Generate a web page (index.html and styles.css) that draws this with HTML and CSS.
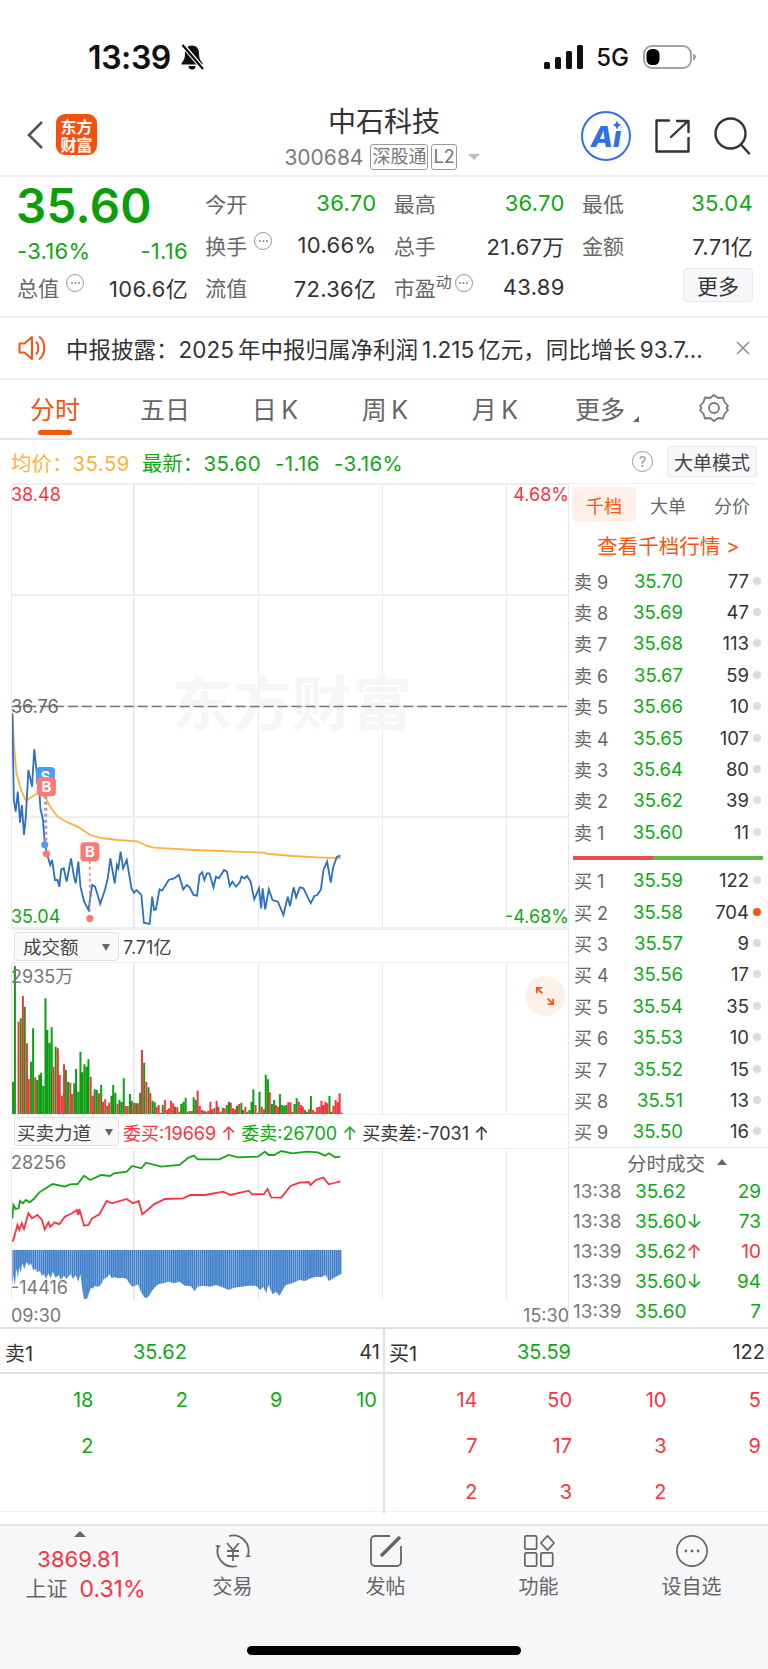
FILE: index.html
```html
<!DOCTYPE html>
<html lang="zh">
<head>
<meta charset="utf-8">
<title>中石科技</title>
<link rel="stylesheet" href="styles.css">
</head>
<body>
<div class="page">
  <header class="status">
    <span class="time">13:39</span>
    <svg class="bell" viewBox="0 0 26 26"><path d="M13 1.500c-4.500 0-7 3.500-7 8 0 4.500-1 7-3.500 9.500v1.500h21V19c-2.500-2.500-3.500-5-3.500-9.500 0-4.500-2.500-8-7-8z" fill="#111"/><path d="M9.500 22a3.500 3.500 0 0 0 7 0z" fill="#111"/><path d="M3 0l21 25" stroke="#fff" stroke-width="4.500"/><path d="M3.500 1l20.500 24" stroke="#111" stroke-width="2.200"/></svg>
    <span class="status-gap"></span>
    <svg class="signal" viewBox="0 0 39 24"><rect x="0" y="17" width="6" height="7" rx="1.500"/><rect x="11" y="12" width="6" height="12" rx="1.500"/><rect x="22" y="6" width="6" height="18" rx="1.500"/><rect x="33" y="0" width="6" height="24" rx="1.500"/></svg>
    <span class="net">5G</span>
    <svg class="battery" viewBox="0 0 54 24"><rect x="1" y="1" width="47" height="22" rx="8" fill="#fff" stroke="#a3a3a3" stroke-width="2"/><rect x="3.500" y="4" width="13" height="16" rx="5.500" fill="#000"/><path d="M50 8.500c2 .6 3 2 3 3.500s-1 2.900-3 3.500z" fill="#a3a3a3"/></svg>
  </header>

  <nav class="nav">
    <div class="nav-left">
      <svg class="back" viewBox="0 0 18 30"><path d="M16 2L3 15l13 13" fill="none" stroke="#555" stroke-width="2.600"/></svg>
      <div class="logo"><span>东方</span><span>财富</span></div>
    </div>
    <div class="nav-center">
      <div class="nav-title">中石科技</div>
      <div class="nav-sub">
        <span class="code">300684</span>
        <span class="tag">深股通</span>
        <span class="tag">L2</span>
        <span class="nav-caret"></span>
      </div>
    </div>
    <div class="nav-right">
      <div class="ai"><span>Ai</span><svg class="ai-spark" viewBox="0 0 10 10"><path d="M5 0c.5 3 2 4.500 5 5-3 .5-4.500 2-5 5-.5-3-2-4.500-5-5 3-.5 4.500-2 5-5z"/></svg></div>
      <svg class="share" viewBox="0 0 35 34"><path d="M14 1.500H1.500v31h32V19" fill="none" stroke="#333" stroke-width="2.400" stroke-linejoin="round" stroke-linecap="round"/><path d="M16 18L33 2M22 2h11.500v11" fill="none" stroke="#333" stroke-width="2.400" stroke-linejoin="round" stroke-linecap="round"/></svg>
      <svg class="search" viewBox="0 0 38 38"><circle cx="17.500" cy="16.500" r="15" fill="none" stroke="#333" stroke-width="2.400"/><path d="M28 27.500l8 9" fill="none" stroke="#333" stroke-width="2.400" stroke-linecap="round"/></svg>
    </div>
  </nav>

  <section class="quote">
    <div class="q-cell q-price">35.60</div>
    <div class="q-cell"><span class="q-label">今开</span><span class="g">36.70</span></div>
    <div class="q-cell"><span class="q-label">最高</span><span class="g">36.70</span></div>
    <div class="q-cell"><span class="q-label">最低</span><span class="g">35.04</span></div>

    <div class="q-cell q-change g"><span>-3.16%</span><span>-1.16</span></div>
    <div class="q-cell"><span class="q-label">换手<i class="dots"></i></span><span>10.66%</span></div>
    <div class="q-cell"><span class="q-label">总手</span><span>21.67万</span></div>
    <div class="q-cell"><span class="q-label">金额</span><span>7.71亿</span></div>

    <div class="q-cell"><span class="q-label">总值<i class="dots"></i></span><span>106.6亿</span></div>
    <div class="q-cell"><span class="q-label">流值</span><span>72.36亿</span></div>
    <div class="q-cell"><span class="q-label">市盈<sup class="q-sup">动</sup><i class="dots dots-tight"></i></span><span>43.89</span></div>
    <div class="q-cell q-end"><span class="more-btn">更多</span></div>
  </section>

  <section class="notice">
    <svg class="speaker" viewBox="0 0 30 26"><path d="M1.500 8.500h5L14 2v22l-7.500-6.500h-5z" fill="none" stroke="#f2570f" stroke-width="2" stroke-linejoin="round"/><path d="M18 6.500c3 3 3 10 0 13M21 1.500c7 5 7 18 0 23" fill="none" stroke="#f2570f" stroke-width="2"/></svg>
    <span class="notice-text">中报披露：2025&thinsp;年中报归属净利润&thinsp;1.215&thinsp;亿元，同比增长&thinsp;93.7...</span>
    <svg class="close" viewBox="0 0 14 14"><path d="M1 1l12 12M13 1L1 13" stroke="#8a8a8a" stroke-width="1.500"/></svg>
  </section>

  <section class="tabs">
    <div class="tab tab-on">分时</div>
    <div class="tab">五日</div>
    <div class="tab">日&thinsp;K</div>
    <div class="tab">周&thinsp;K</div>
    <div class="tab">月&thinsp;K</div>
    <div class="tab tab-more">更多</div>
    <div class="tab"><svg class="gear" viewBox="0 0 30 30"><path d="M15 2l4 3 5-.5 1.500 4.500L29 13l-1.500 2 1.500 2-3.500 4-1.500 4.500-5-.5-4 3-4-3-5 .5L4.500 21 1 17l1.500-2L1 13l3.500-4L6 4.500l5 .5z" fill="none" stroke="#777" stroke-width="1.800" stroke-linejoin="round"/><circle cx="15" cy="15" r="5" fill="none" stroke="#777" stroke-width="1.800"/></svg></div>
  </section>

  <section class="info">
    <span class="avg">均价：<b class="info-num">35.59</b></span>
    <span class="g latest">最新：<b class="info-num">35.60</b><b class="info-num">-1.16</b><b class="info-num">-3.16%</b></span>
    <span class="status-gap"></span>
    <span class="help">?</span>
    <span class="big-btn">大单模式</span>
  </section>

  <main class="body">
    <div class="left">
      <div class="panel main-chart">
        <span class="wm">东方财富</span>
        <svg class="plot" viewBox="30 -588 1529 1335" preserveAspectRatio="none">
          <polyline class="ln ln-avg" points="31,105 36,200 42,280 55,330 68,362 85,350 100,340 120,350 135,380 155,410 185,428 210,440 245,465 275,474 320,480 375,484 400,498 420,503 530,510 720,518 735,522 800,528 870,532 932,534"/>
          <polyline class="ln ln-price" points="31,100 35,360 40,395 46,335 52,428 57,375 63,465 68,410 75,270 85,320 91,208 100,300 105,330 108,385 115,420 120,490 127,525 135,555 140,540 148,600 155,600 160,620 165,568 172,565 180,605 192,535 200,590 205,610 212,545 218,620 228,665 240,690 250,615 258,620 265,645 272,672 285,630 293,595 300,535 312,610 318,555 322,565 328,515 335,565 345,540 358,625 365,638 372,630 385,645 392,728 408,732 415,650 420,690 425,688 435,628 442,632 460,600 475,595 488,585 500,628 510,615 518,622 528,645 538,647 545,585 552,577 558,600 565,580 572,580 583,622 590,590 598,595 612,570 620,575 628,618 635,605 645,620 655,608 660,590 668,595 675,588 685,605 695,658 708,625 714,685 718,625 725,688 735,628 745,660 760,665 775,705 787,650 793,678 803,622 810,652 820,622 830,625 850,670 860,648 868,645 878,628 885,570 895,545 905,608 912,560 922,530 932,527"/>
        </svg>
        <svg class="plot" viewBox="0 0 558 445">
          <line class="mid-dash" x1="0" y1="222.500" x2="558" y2="222.500"/>
          <line class="dot-b" x1="33" y1="300" x2="33" y2="361"/>
          <line class="dot-r" x1="34.600" y1="312" x2="34.600" y2="370"/>
          <line class="dot-r" x1="78" y1="377" x2="78" y2="435"/>
          <circle cx="32.800" cy="361" r="3.600" fill="#4d9bf7"/>
          <circle cx="34.600" cy="370" r="3.600" fill="#fb7a73"/>
          <circle cx="78" cy="435" r="3.600" fill="#fb7a73"/>
          <rect x="24" y="283" width="19" height="19" rx="4" fill="#4d9bf7"/>
          <text class="mk" x="33.500" y="298">S</text>
          <rect x="25" y="293.500" width="19" height="19" rx="4" fill="#fb7a73"/>
          <text class="mk" x="34.500" y="308.500">B</text>
          <rect x="68.500" y="358.500" width="19" height="19" rx="4" fill="#fb7a73"/>
          <text class="mk" x="78" y="373.500">B</text>
        </svg>
        <span class="ax ax-tl r">38.48</span>
        <span class="ax ax-tr r">4.68%</span>
        <span class="ax ax-ml">36.76</span>
        <span class="ax ax-bl g">35.04</span>
        <span class="ax ax-br g">-4.68%</span>
      </div>

      <div class="sub-head">
        <span class="sel">成交额<i class="sel-caret"></i></span>
        <span class="sub-val">7.71亿</span>
      </div>
      <div class="panel sub-chart">
        <svg class="plot" viewBox="30 102 1530 450" preserveAspectRatio="none">
          <path class="bar bar-g" d="M33 552V455M38 552V108M54 552V265M65 552V230M82 552V395M88 552V295M99 552V450M105 552V435M110 552V428M116 552V467M122 552V205M127 552V300M133 552V338M139 552V292M150 552V350M178 552V420M184 552V455M201 552V460M206 552V417M212 552V485M218 552V365M223 552V427M229 552V403M235 552V410M240 552V388M257 552V478M263 552V480M275 552V465M292 552V527M303 552V497M308 552V465M314 552V488M325 552V510M331 552V515M337 552V445M354 552V492M359 552V512M371 552V520M382 552V488M393 552V398M405 552V472M416 552V512M422 552V517M444 552V525M478 552V530M495 552V522M501 552V515M507 552V503M518 552V543M529 552V502M535 552V510M558 552V542M586 552V535M609 552V533M620 552V525M626 552V515M648 552V527M660 552V518M665 552V540M682 552V540M688 552V515M693 552V478M710 552V485M727 552V434M733 552V448M744 552V522M750 552V510M766 552V492M772 552V525M778 552V527M784 552V525M806 552V522M812 552V505M835 552V540M840 552V545M851 552V498M902 552V498M908 552V545"/>
          <path class="bar bar-r" d="M48 552V275M60 552V198M71 552V340M76 552V447M94 552V442M144 552V410M156 552V355M161 552V435M167 552V497M173 552V403M190 552V458M195 552V492M246 552V440M252 552V497M269 552V490M280 552V515M286 552V508M297 552V518M320 552V522M342 552V528M348 552V528M365 552V518M376 552V520M387 552V360M399 552V455M410 552V490M427 552V530M433 552V525M439 552V548M450 552V510M456 552V540M461 552V535M467 552V512M473 552V520M484 552V532M490 552V545M512 552V545M524 552V543M540 552V482M546 552V528M552 552V540M563 552V545M569 552V542M575 552V515M580 552V538M592 552V512M597 552V530M603 552V545M614 552V535M631 552V518M637 552V535M643 552V538M654 552V522M671 552V530M677 552V545M699 552V525M705 552V548M716 552V530M722 552V538M738 552V487M755 552V525M761 552V530M789 552V517M795 552V517M801 552V545M818 552V515M824 552V525M829 552V530M846 552V538M857 552V540M863 552V545M868 552V532M874 552V530M880 552V512M885 552V525M891 552V515M896 552V520M913 552V527M919 552V510M925 552V517M930 552V490M936 552V548"/>
        </svg>
        <span class="ax ax-vol">2935万</span>
        <span class="expand"><svg viewBox="0 0 22 22"><path d="M2 8V2h6M2 2l6 6M20 14v6h-6M20 20l-6-6" fill="none" stroke="#f2570f" stroke-width="2"/></svg></span>
      </div>

      <div class="sub-head sub-head-2">
        <span class="sel">买卖力道<i class="sel-caret sel-caret-tight"></i></span>
        <span class="force r">委买:19669 ↑</span>
        <span class="force g">委卖:26700 ↑</span>
        <span class="force">买卖差:-7031 ↑</span>
      </div>
      <div class="panel sub-chart">
        <svg class="plot" viewBox="30 105 1530 450" preserveAspectRatio="none">
          <defs><pattern id="stripe" width="5.670" height="10" patternUnits="userSpaceOnUse" x="30"><rect width="4.600" height="10" fill="#3f7fca"/><rect x="4.600" width="1.070" height="10" fill="#6f9fd8"/></pattern></defs>
          <polygon fill="url(#stripe)" points="31,405 31,510 34,480 38,512 42,460 46,490 50,455 54,475 58,445 64,462 70,440 76,452 82,445 88,465 94,462 100,472 106,468 112,482 118,478 124,492 130,475 136,490 142,470 150,488 158,480 165,495 172,482 180,492 190,478 198,492 205,480 212,500 218,478 224,530 228,552 236,552 240,540 246,520 252,520 258,512 266,516 274,510 282,492 290,488 298,478 304,490 312,486 322,490 334,488 345,492 352,505 360,515 368,512 376,508 384,530 392,545 400,550 408,540 416,525 424,515 432,508 445,505 460,500 475,505 490,500 505,512 520,513 532,528 540,515 555,512 575,515 590,510 605,515 625,525 640,518 660,515 680,512 700,512 712,525 720,515 728,535 735,510 745,538 755,530 765,542 772,528 782,510 800,505 820,495 835,498 850,490 865,485 880,487 892,480 900,498 915,488 932,478 935,478 935,405"/>
          <polyline class="ln ln-g" points="31,310 34,270 40,282 48,280 52,258 60,265 68,255 78,262 90,252 105,232 125,218 142,207 175,215 190,208 210,207 228,182 245,195 275,180 300,183 310,175 345,170 360,153 385,160 398,143 440,155 490,150 515,128 530,122 540,133 600,133 625,120 650,127 705,125 725,110 735,120 750,120 770,108 800,115 840,110 870,112 890,122 900,115 918,127 932,125"/>
          <polyline class="ln ln-r" points="31,380 35,370 45,330 50,345 57,325 63,342 75,295 85,310 100,300 112,315 120,343 130,322 135,335 148,322 160,328 175,305 195,295 208,285 212,300 215,282 228,332 240,330 250,310 270,298 290,258 305,265 345,252 362,265 378,258 388,298 420,268 450,252 500,250 520,240 560,240 610,230 630,240 680,227 690,238 722,237 732,222 742,247 770,248 795,213 820,203 845,201 850,210 865,195 885,188 900,208 915,204 932,199"/>
        </svg>
        <span class="ax ax-f1">28256</span>
        <span class="ax ax-f2">-14416</span>
      </div>
      <div class="times"><span>09:30</span><span>15:30</span></div>
    </div>

    <aside class="side">
      <div class="side-tabs">
        <span class="side-tab side-tab-on">千档</span>
        <span class="side-tab">大单</span>
        <span class="side-tab">分价</span>
      </div>
      <div class="side-link">查看千档行情 &gt;</div>
      <div class="book">
        <div class="ob"><span class="ob-l">卖 9</span><span class="ob-p g">35.70</span><span class="ob-v">77</span><i class="ob-d"></i></div>
        <div class="ob"><span class="ob-l">卖 8</span><span class="ob-p g">35.69</span><span class="ob-v">47</span><i class="ob-d"></i></div>
        <div class="ob"><span class="ob-l">卖 7</span><span class="ob-p g">35.68</span><span class="ob-v">113</span><i class="ob-d"></i></div>
        <div class="ob"><span class="ob-l">卖 6</span><span class="ob-p g">35.67</span><span class="ob-v">59</span><i class="ob-d"></i></div>
        <div class="ob"><span class="ob-l">卖 5</span><span class="ob-p g">35.66</span><span class="ob-v">10</span><i class="ob-d"></i></div>
        <div class="ob"><span class="ob-l">卖 4</span><span class="ob-p g">35.65</span><span class="ob-v">107</span><i class="ob-d"></i></div>
        <div class="ob"><span class="ob-l">卖 3</span><span class="ob-p g">35.64</span><span class="ob-v">80</span><i class="ob-d"></i></div>
        <div class="ob"><span class="ob-l">卖 2</span><span class="ob-p g">35.62</span><span class="ob-v">39</span><i class="ob-d"></i></div>
        <div class="ob"><span class="ob-l">卖 1</span><span class="ob-p g">35.60</span><span class="ob-v">11</span><i class="ob-d"></i></div>
      </div>
      <div class="ratio"><i class="ratio-r"></i><i class="ratio-g"></i></div>
      <div class="book">
        <div class="ob"><span class="ob-l">买 1</span><span class="ob-p g">35.59</span><span class="ob-v">122</span><i class="ob-d"></i></div>
        <div class="ob"><span class="ob-l">买 2</span><span class="ob-p g">35.58</span><span class="ob-v">704</span><i class="ob-d ob-d-on"></i></div>
        <div class="ob"><span class="ob-l">买 3</span><span class="ob-p g">35.57</span><span class="ob-v">9</span><i class="ob-d"></i></div>
        <div class="ob"><span class="ob-l">买 4</span><span class="ob-p g">35.56</span><span class="ob-v">17</span><i class="ob-d"></i></div>
        <div class="ob"><span class="ob-l">买 5</span><span class="ob-p g">35.54</span><span class="ob-v">35</span><i class="ob-d"></i></div>
        <div class="ob"><span class="ob-l">买 6</span><span class="ob-p g">35.53</span><span class="ob-v">10</span><i class="ob-d"></i></div>
        <div class="ob"><span class="ob-l">买 7</span><span class="ob-p g">35.52</span><span class="ob-v">15</span><i class="ob-d"></i></div>
        <div class="ob"><span class="ob-l">买 8</span><span class="ob-p g">35.51</span><span class="ob-v">13</span><i class="ob-d"></i></div>
        <div class="ob"><span class="ob-l">买 9</span><span class="ob-p g">35.50</span><span class="ob-v">16</span><i class="ob-d"></i></div>
      </div>
      <div class="trades">
        <div class="tr-head">分时成交<i class="tr-caret"></i></div>
        <div class="tr"><span class="tr-t">13:38</span><span class="g">35.62</span><span class="tr-v g">29</span></div>
        <div class="tr"><span class="tr-t">13:38</span><span class="g">35.60↓</span><span class="tr-v g">73</span></div>
        <div class="tr"><span class="tr-t">13:39</span><span class="g">35.62<b class="r">↑</b></span><span class="tr-v r">10</span></div>
        <div class="tr"><span class="tr-t">13:39</span><span class="g">35.60↓</span><span class="tr-v g">94</span></div>
        <div class="tr"><span class="tr-t">13:39</span><span class="g">35.60</span><span class="tr-v g">7</span></div>
      </div>
    </aside>
  </main>

  <section class="levels">
    <div class="lv lv-left">
      <div class="lv-head"><span>卖1</span><span class="g lv-price">35.62</span><span class="lv-vol">41</span></div>
      <div class="lv-grid g"><span>18</span><span>2</span><span>9</span><span>10</span><span>2</span></div>
    </div>
    <div class="lv lv-right">
      <div class="lv-head"><span>买1</span><span class="g lv-price">35.59</span><span class="lv-vol">122</span></div>
      <div class="lv-grid r"><span>14</span><span>50</span><span>10</span><span>5</span><span>7</span><span>17</span><span>3</span><span>9</span><span>2</span><span>3</span><span>2</span></div>
    </div>
  </section>

  <footer class="foot">
    <div class="foot-items">
      <div class="fi fi-index">
        <i class="fi-tri"></i>
        <span class="fi-num r">3869.81</span>
        <span class="fi-line">上证<b class="r fi-pct">0.31%</b></span>
      </div>
      <div class="fi">
        <svg class="fi-icon fi-icon-wide" viewBox="0 0 38 34"><path d="M15 2A15.500 15.500 0 0 1 34 21M23 32A15.500 15.500 0 0 1 4 13" fill="none" stroke="#666" stroke-width="1.800"/><path d="M1 11l3 3.500 3-3zM31 23l3.500-3 2.500 3z" fill="#666"/><path d="M13 9l6 7 6-7M19 16v11M13 17h12M13 22h12" fill="none" stroke="#666" stroke-width="1.800"/></svg>
        <span class="fi-label">交易</span>
      </div>
      <div class="fi">
        <svg class="fi-icon" viewBox="0 0 34 34"><path d="M21 2H6a4 4 0 0 0-4 4v22a4 4 0 0 0 4 4h22a4 4 0 0 0 4-4V12" fill="none" stroke="#666" stroke-width="1.800"/><path d="M12 22L31 3" fill="none" stroke="#666" stroke-width="3.400"/></svg>
        <span class="fi-label">发帖</span>
      </div>
      <div class="fi">
        <svg class="fi-icon" viewBox="0 0 36 36"><rect x="3" y="2" width="12.500" height="14" rx="1.500" fill="none" stroke="#666" stroke-width="1.800"/><path d="M27 2l7 7.500-7 7.500-7-7.500z" fill="none" stroke="#666" stroke-width="1.800" stroke-linejoin="round"/><rect x="3" y="20" width="12.500" height="14" rx="1.500" fill="none" stroke="#666" stroke-width="1.800"/><rect x="20" y="20" width="12.500" height="14" rx="1.500" fill="none" stroke="#666" stroke-width="1.800"/></svg>
        <span class="fi-label">功能</span>
      </div>
      <div class="fi">
        <svg class="fi-icon" viewBox="0 0 36 36"><circle cx="18" cy="18" r="16" fill="none" stroke="#666" stroke-width="1.800"/><circle cx="11.500" cy="18" r="1.500" fill="#666"/><circle cx="18" cy="18" r="1.500" fill="#666"/><circle cx="24.500" cy="18" r="1.500" fill="#666"/></svg>
        <span class="fi-label">设自选</span>
      </div>
    </div>
    <div class="home"></div>
  </footer>
</div>
</body>
</html>
```

FILE: styles.css
```css
* { box-sizing: border-box; }
html, body { margin: 0; padding: 0; background: #fff; }
body { font-family: Inter, "Noto Sans CJK SC", sans-serif; color: #333; }
i { font-style: normal; display: block; }
b { font-weight: 400; }
.page { width: 768px; height: 1669px; overflow: hidden; display: flex; flex-direction: column; }
.g { color: #10a714; }
.r { color: #fa3340; }

/* status bar */
.status { height: 100px; padding: 14px 71px 0 88px; display: flex; align-items: center; flex: none; }
.time { font-size: 32px; font-weight: 600; color: #111; letter-spacing: -0.4px; }
.bell { width: 26px; height: 26px; margin-left: 8px; }
.status-gap { flex: 1; }
.signal { width: 39px; height: 24px; fill: #111; }
.net { font-size: 24px; font-weight: 500; color: #111; margin: 0 14px 0 13px; }
.battery { width: 54px; height: 24px; }

/* nav */
.nav { height: 77px; flex: none; display: grid; grid-template-columns: 1fr auto 1fr; border-bottom: 2px solid #eeeef0; padding: 0 26px; }
.nav-left { display: flex; align-items: center; gap: 12px; padding-bottom: 6px; }
.back { width: 18px; height: 30px; }
.logo { width: 41px; height: 41px; border-radius: 9px; background: #f4500f; color: #fff; display: flex; flex-direction: column; align-items: center; justify-content: center; font-size: 16px; line-height: 18px; font-weight: 700; font-family: "Noto Sans CJK SC", sans-serif; }
.nav-center { display: flex; flex-direction: column; align-items: center; padding-top: 5px; }
.nav-title { font-size: 28px; line-height: 34px; color: #333; }
.nav-sub { display: flex; align-items: center; gap: 3px; height: 30px; margin-top: 3px; color: #777; margin-right: 4px; }
.code { font-size: 21px; margin-right: 4px; color: #7c7c7c; }
.tag { border: 1px solid #999; border-radius: 3px; font-size: 18px; line-height: 24px; height: 26px; padding: 0 1px; color: #777; }
.nav-caret { width: 0; height: 0; border-left: 6px solid transparent; border-right: 6px solid transparent; border-top: 6px solid #bbb; margin-left: 8px; }
.nav-right { display: flex; align-items: center; justify-content: flex-end; gap: 23px; padding-bottom: 4px; margin-right: -9px; }
.ai { width: 50px; height: 50px; border-radius: 50%; border: 2.5px solid #2f6fe9; display: flex; align-items: center; justify-content: center; color: #2f6fe9; font-size: 29px; font-weight: 800; font-style: italic; position: relative; margin-right: 1px; padding-top: 1px; }
.ai-spark { position: absolute; left: 29px; top: 7px; width: 10px; height: 10px; fill: #2f6fe9; background: #fff; border-radius: 50%; }
.share { width: 35px; height: 34px; }
.search { width: 38px; height: 38px; }

/* quote */
.quote { height: 141px; flex: none; padding: 5px 15px 0 17px; display: grid; grid-template-columns: repeat(4, 171px); grid-template-rows: repeat(3, 42px); column-gap: 17.33px; border-bottom: 2px solid #eeeef0; font-size: 22px; letter-spacing: 0.3px; }
.q-cell { display: flex; justify-content: space-between; align-items: center; white-space: nowrap; }
.q-label { color: #666; display: flex; font-size: 21px; letter-spacing: 0; }
.q-price { font-size: 47.5px; font-weight: 600; color: #0a9e0a; line-height: 42px; padding-top: 6px; justify-content: flex-start; margin-left: -1px; }
.q-change { padding-top: 12px; }
.q-sup { font-size: 16px; line-height: 16px; margin-top: 2px; }
.dots { width: 18px; height: 18px; border: 1.5px solid #999; border-radius: 50%; margin: 2px 0 0 7px; position: relative; }
.dots::after { content: ""; position: absolute; left: 3.5px; top: 6.5px; width: 2px; height: 2px; border-radius: 50%; background: #888; box-shadow: 3.5px 0 #888, 7px 0 #888; }
.dots-tight { margin-left: 3px; }
.q-end { justify-content: flex-end; }
.more-btn { width: 70px; height: 34px; background: #f6f7f9; border: 1px solid #e6e8ec; border-radius: 4px; display: flex; align-items: center; justify-content: center; font-size: 21px; margin-top: -4px; letter-spacing: 0; }

/* notice */
.notice { height: 62px; flex: none; display: flex; align-items: center; padding: 0 18px; border-bottom: 2px solid #eeeef0; }
.speaker { width: 30px; height: 26px; }
.notice-text { font-size: 22.5px; margin-left: 18px; flex: 1; color: #333; white-space: nowrap; }
.close { width: 14px; height: 14px; }

/* tabs */
.tabs { height: 60px; flex: none; display: grid; grid-template-columns: repeat(6, 110px) 108px; align-items: center; border-bottom: 2px solid #e4e6ec; font-size: 25px; color: #666; }
.tab { text-align: center; position: relative; height: 100%; display: flex; align-items: center; justify-content: center; padding-bottom: 2px; white-space: nowrap; }
.tab-on { color: #f2570f; }
.tab-on::after { content: ""; position: absolute; left: 38px; bottom: 3px; width: 34px; height: 5px; border-radius: 3px; background: #f2570f; }
.tab-more { padding-right: 10px; }
.tab-more::after { content: ""; position: absolute; left: 83px; bottom: 16px; border-left: 6px solid transparent; border-bottom: 6px solid #666; }
.gear { width: 30px; height: 30px; }

/* info row */
.info { height: 44px; flex: none; margin: 0 11px; display: flex; align-items: center; font-size: 20.5px; border-bottom: 1.5px solid #eceef2; white-space: nowrap; }
.avg { color: #fdb23c; }
.latest { margin-left: 12px; }
.info-num { margin-right: 14px; font-size: 20.5px; letter-spacing: 0.4px; }
.avg .info-num { margin-right: 0; }
.help { width: 21px; height: 21px; border: 1.5px solid #999; border-radius: 50%; color: #999; font-size: 15px; display: flex; align-items: center; justify-content: center; margin-right: 14px; }
.big-btn { width: 90px; height: 31px; background: #f6f7f9; border: 1px solid #e6e8ec; border-radius: 3px; font-size: 19px; display: flex; align-items: center; justify-content: center; color: #444; }

/* chart body */
.body { height: 843px; flex: none; display: grid; grid-template-columns: 569px 199px; }
.left { display: flex; flex-direction: column; padding-left: 11px; }
.panel { position: relative; border-left: 1.5px solid #e8eaf0; }
.plot { position: absolute; left: 0; top: 0; width: 100%; height: 100%; display: block; }
.main-chart { height: 446px; border-bottom: 1.5px solid #e8eaf0; background-image: repeating-linear-gradient(90deg, transparent 0 121.5px, #e8eaf0 121.5px 123px, transparent 123px 124px), linear-gradient(180deg, transparent 109.5px, #eceef3 109.5px); background-size: 100% 100%, 100% 111px; background-position: 0 0, 0 1px; background-repeat: no-repeat, repeat-y; }
.sub-chart { height: 150px; margin-top: 1px; background-image: repeating-linear-gradient(90deg, transparent 0 121.5px, #e8eaf0 121.5px 123px, transparent 123px 124px); }
.ln { fill: none; vector-effect: non-scaling-stroke; stroke-width: 1.8; }
.ln-avg { stroke: #fbb33c; }
.ln-price { stroke: #2b70c1; }
.ln-g { stroke: #10a714; }
.ln-r { stroke: #fa3340; }
.bar { fill: none; stroke-width: 2; vector-effect: non-scaling-stroke; }
.bar-g { stroke: #0d9f12; }
.bar-r { stroke: #fa3340; }
.mid-dash { stroke: #777; stroke-width: 1.5; stroke-dasharray: 10 4; }
.dot-r { stroke: #fb7a73; stroke-width: 1.5; stroke-dasharray: 3 3; }
.dot-b { stroke: #4d9bf7; stroke-width: 1.5; stroke-dasharray: 3 3; }
.mk { fill: #fff; font-size: 15px; font-weight: 700; text-anchor: middle; }
.wm { position: absolute; left: 160px; top: 185px; font-size: 60px; line-height: 70px; font-weight: 700; color: #f6f6f7; white-space: nowrap; }
.ax { position: absolute; font-size: 18px; line-height: 20px; white-space: nowrap; }
.ax-tl { left: -1px; top: 1px; }
.ax-tr { right: 0; top: 1px; }
.ax-ml { left: -1px; top: 213px; color: #666; }
.ax-bl { left: -1px; bottom: 2px; }
.ax-br { right: 0; bottom: 2px; }
.ax-vol { left: -1px; top: 3px; color: #777; }
.ax-f1 { left: -1px; top: 3px; color: #777; }
.ax-f2 { left: -1px; top: 128px; color: #777; }
.expand { position: absolute; left: 513px; top: 12px; width: 40px; height: 40px; border-radius: 50%; background: #fdf0ea; display: flex; align-items: center; justify-content: center; }
.expand svg { width: 20px; height: 20px; }
.sub-head { height: 33px; display: flex; align-items: center; gap: 4px; padding-left: 3px; white-space: nowrap; border-bottom: 1.5px solid #eceef2; }
.sub-head-2 { height: 35px; border-top: 1.5px solid #eceef2; }
.sel { width: 105px; height: 29px; border: 1px solid #dfe1e6; border-radius: 4px; background: #fafafa; font-size: 18.5px; color: #444; display: flex; align-items: center; padding-left: 8px; position: relative; }
.sub-head-2 .sel { padding-left: 2px; }
.sel-caret { position: absolute; right: 8px; top: 11px; border-left: 4.5px solid transparent; border-right: 4.5px solid transparent; border-top: 7px solid #666; }
.sel-caret-tight { right: 5px; }
.sub-val { font-size: 18px; color: #444; }
.force { font-size: 18px; margin-right: 1px; }
.times { height: 27px; display: flex; justify-content: space-between; align-items: center; font-size: 18px; color: #777; padding-top: 3px; }

/* side panel */
.side { border-left: 1px solid #e5e7ec; margin-left: -1px; display: flex; flex-direction: column; }
.side-tabs { display: grid; grid-template-columns: 64px 64px 64px; height: 35px; margin: 3px 0 0 3px; font-size: 18px; color: #666; }
.side-tab { display: flex; align-items: center; justify-content: center; border-radius: 5px; }
.side-tab-on { background: #feefe8; color: #f9560c; }
.side-link { height: 43px; display: flex; align-items: center; justify-content: center; color: #f9560c; font-size: 20.5px; padding-top: 3px; }
.book { display: grid; grid-auto-rows: 31.4px; padding-left: 5px; }
.ob { display: grid; grid-template-columns: 50px 59px 66px 12px; align-items: center; font-size: 18.5px; }
.ob-l { color: #666; white-space: nowrap; font-size: 18px; }
.ob-p { text-align: right; }
.ob-v { text-align: right; color: #333; }
.ob-d { width: 8px; height: 8px; border-radius: 50%; background: #d9dce3; justify-self: end; }
.ob-d-on { background: #f2570f; }
.ratio { display: flex; height: 4px; margin: 8px 5px 5px 4px; flex: none; }
.ratio-r { width: 80px; background: #ee4a4f; }
.ratio-g { flex: 1; background: #60b946; }
.trades { border-top: 1.5px solid #e2e4ea; flex: 1; padding-left: 4px; }
.tr-head { height: 28px; display: flex; align-items: center; font-size: 19.5px; color: #666; padding-left: 54px; }
.tr-caret { margin-left: 12px; border-left: 5px solid transparent; border-right: 5px solid transparent; border-bottom: 6px solid #666; }
.tr { display: grid; grid-template-columns: 62px 92px 34px; height: 30px; align-items: center; font-size: 19px; white-space: nowrap; }
.tr-t { color: #777; }
.tr-v { text-align: right; }

/* levels */
.levels { height: 185px; flex: none; display: grid; grid-template-columns: 383px 385px; border-top: 2px solid #dde0e6; border-bottom: 1.5px solid #eeeef0; font-size: 20px; }
.lv-right { border-left: 2px solid #dde0e6; }
.lv-head { height: 45px; display: grid; grid-template-columns: 128px 70px 1fr; align-items: center; padding: 3px 3px 0 5px; border-bottom: 2px solid #dde0e6; color: #333; }
.lv-vol { text-align: right; }
.lv-grid { display: grid; grid-template-columns: repeat(4, 94.5px); grid-template-rows: 46px 46px 44px; padding-top: 3px; line-height: 46px; text-align: right; margin-left: -1px; }
.lv-right .lv-grid { margin-left: -2px; }
.lv-right .lv-head { padding-left: 4px; }

/* footer */
.foot { flex: 1; margin-top: 12px; background: #f6f7f9; border-top: 2px solid #e1e5ec; display: flex; flex-direction: column; }
.foot-items { display: grid; grid-template-columns: repeat(5, 153px); padding-left: 3px; height: 98px; }
.fi { display: flex; flex-direction: column; align-items: center; padding-top: 8px; }
.fi-icon { width: 34px; height: 34px; }
.fi-icon-wide { width: 38px; }
.fi-label { font-size: 20px; color: #666; margin-top: 5px; line-height: 28px; }
.fi-index { padding-top: 5px; }
.fi-tri { border-left: 6px solid transparent; border-right: 6px solid transparent; border-bottom: 6px solid #666; }
.fi-num { font-size: 22px; line-height: 28px; margin-top: 8px; margin-right: 2px; }
.fi-line { font-size: 21px; color: #666; line-height: 30px; margin: 1px 0 0 12px; white-space: nowrap; display: flex; align-items: center; }
.fi-pct { margin-left: 12px; font-size: 23px; }
.home { width: 274px; height: 9px; border-radius: 5px; background: #000; margin: 22px auto 0; }
```
